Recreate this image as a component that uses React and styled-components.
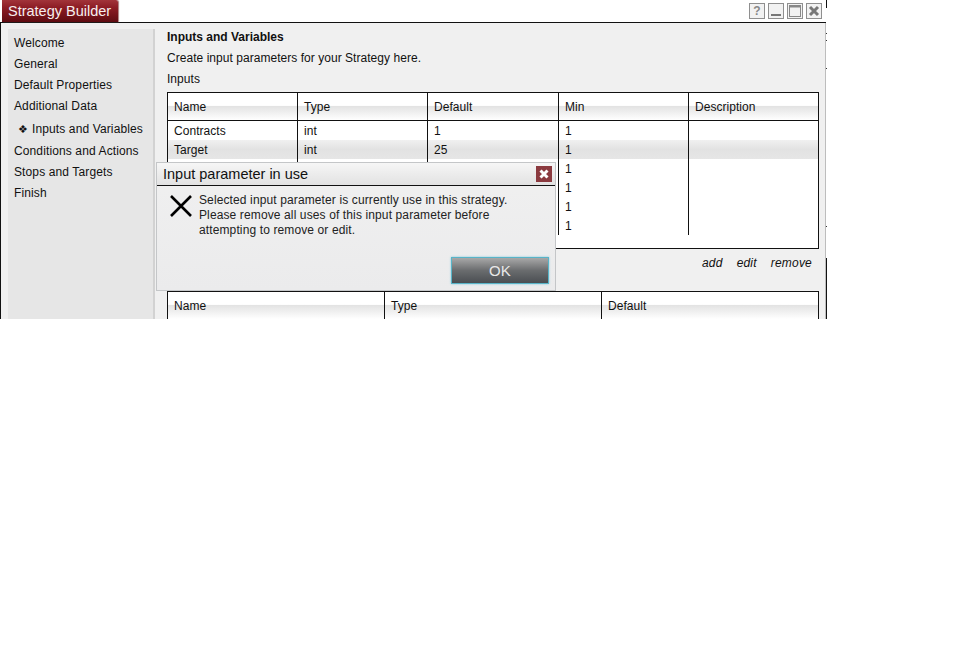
import React from 'react';
import styled, { createGlobalStyle } from 'styled-components';

const Global = createGlobalStyle`
  html, body { margin: 0; padding: 0; background: #fff; }
  body { font-family: "Liberation Sans", Arial, sans-serif; font-size: 12px; letter-spacing: 0.04px; color: #111; }
`;

const Window = styled.div`
  position: relative;
  width: 827px;
  height: 319px;
  padding-right: 1px;
  overflow: hidden;
  background: #fff;
  display: flex;
  flex-direction: column;
  box-sizing: border-box;
`;
const EdgeStrip = styled.div`
  position: absolute;
  top: 0;
  right: 0;
  bottom: 0;
  width: 1px;
  background: linear-gradient(
    #111 0 8px, #fff 8px 33px, #333 33px 34px, #fff 34px 40px, #333 40px 41px,
    #fff 41px 68px, #333 68px 69px, #fff 69px 226px, #333 226px 227px,
    #fff 227px 258px, #111 258px 100%
  );
`;
const TitleBar = styled.header`
  height: 23px;
  flex: none;
  box-sizing: border-box;
  border-bottom: 1px solid #111;
  display: flex;
  justify-content: space-between;
  align-items: flex-start;
  padding: 0 4px 0 2px;
`;
const TitleTab = styled.div`
  width: 116px;
  height: 22px;
  box-sizing: border-box;
  padding: 3px 0 0 6px;
  color: #f6eeee;
  font-size: 14.5px;
  line-height: 16px;
  letter-spacing: 0;
  white-space: nowrap;
  background: linear-gradient(#a2343a 0%, #8c1c24 35%, #741219 70%, #5f0c12 100%);
  border-top-right-radius: 2px;
  box-shadow: 1px 0 1px #a87a7a;
`;
const WinButtons = styled.div`
  display: flex;
  gap: 3px;
  padding: 3px 0 0;
`;
const WinButton = styled.div`
  width: 16px;
  height: 16px;
  box-sizing: border-box;
  border: 1px solid #8f8f8f;
  background: #f2f2f2;
  display: flex;
  align-items: center;
  justify-content: center;
  color: #888;
  font-size: 12px;
  font-weight: 700;
`;
const Main = styled.div`
  flex: 1;
  min-height: 0;
  display: flex;
  background: #f0f0f0;
  border-left: 1px solid #111;
  border-right: 1px solid #bdbdbd;
  padding: 6px 0 0 7px;
`;
const Sidebar = styled.nav`
  flex: none;
  width: 139px;
  background: #e6e6e6;
  border-right: 2px solid #d2d2d2;
  padding: 4px 0 0 6px;
`;
const NavItem = styled.div`
  height: ${p => (p.$active ? '23px' : '21px')};
  line-height: ${p => (p.$active ? '22px' : '20px')};
  padding-left: ${p => (p.$active ? '4px' : '0')};
  white-space: nowrap;
  letter-spacing: ${p => (p.$active ? '0.12px' : '0.12px')};
  margin-top: ${p => (p.$active ? '1px' : '0')};
`;
const Bullet = styled.span`
  display: inline-block;
  width: 14px;
  font-size: 11px;
`;
const Content = styled.section`
  flex: 1;
  min-width: 0;
  padding: 0 6px 0 12px;
`;
const Heading = styled.div`
  font-weight: 700;
  height: 21px;
  line-height: 16px;
  letter-spacing: 0;
`;
const Line = styled.div`
  height: 21px;
  line-height: 16px;
`;
const Table = styled.div`
  box-sizing: border-box;
  border: 1px solid #111;
  background: #fff;
  height: ${p => p.$height}px;
`;
const HeaderRow = styled.div`
  display: grid;
  grid-template-columns: ${p => p.$cols};
  height: 28px;
  box-sizing: border-box;
  border-bottom: 1px solid #111;
  background: linear-gradient(#fff 0 46%, #e3e3e3 50%, #fff 100%);
`;
const HeaderCell = styled.div`
  padding: 7px 0 0 6px;
  line-height: 14px;
  border-right: ${p => (p.$last ? '0' : '1px solid #111')};
`;
const Row = styled.div`
  display: grid;
  grid-template-columns: ${p => p.$cols};
  height: 19px;
  background: ${p => (p.$alt ? 'linear-gradient(#f0f0f0, #e2e2e2 50%, #e6e6e6)' : '#fff')};
`;
const Cell = styled.div`
  padding: 3px 0 0 6px;
  line-height: 15px;
  border-right: ${p => (p.$last ? '0' : '1px solid #111')};
`;
const Actions = styled.div`
  display: flex;
  justify-content: flex-end;
  gap: 14px;
  height: 42px;
  box-sizing: border-box;
  padding: 7px 7px 0 0;
  font-style: italic;
  line-height: 15px;
  letter-spacing: 0.2px;
`;
const Dialog = styled.div`
  position: absolute;
  left: 156px;
  top: 162px;
  width: 400px;
  height: 129px;
  box-sizing: border-box;
  border: 1px solid #c4c6c8;
  background: linear-gradient(#f0f0f0, #ebebec);
  display: flex;
  flex-direction: column;
`;
const DialogHead = styled.div`
  height: 23px;
  flex: none;
  box-sizing: border-box;
  border-bottom: 1px solid #111;
  background: linear-gradient(#f6f6f6, #e2e2e2);
  display: flex;
  align-items: center;
  justify-content: space-between;
  padding: 0 3px 0 6px;
  font-size: 14.5px;
  letter-spacing: 0;
`;
const CloseBox = styled.div`
  width: 16px;
  height: 16px;
  background: #8b3a3f;
  display: flex;
  align-items: center;
  justify-content: center;
`;
const DialogBody = styled.div`
  flex: 1;
  display: flex;
  gap: 7px;
  padding: 7px 0 0 13px;
  line-height: 15px;
  letter-spacing: 0.12px;
  color: #222;
`;
const ErrorIcon = styled.svg`
  flex: none;
  margin-top: 2px;
`;
const DialogFoot = styled.div`
  display: flex;
  justify-content: flex-end;
  padding: 0 6px 6px 0;
`;
const OkButton = styled.div`
  width: 96px;
  height: 25px;
  border: 1px solid #58b4c8;
  box-shadow: 0 0 2px #7fc8d8;
  background: linear-gradient(#a8a8a8, #6a6c6e 50%, #4a4e52);
  color: #e8e8e8;
  font-size: 15px;
  display: flex;
  align-items: center;
  justify-content: center;
`;

const cols1 = '130px 130px 131px 130px 1fr';
const cols2 = '217px 217px 1fr';
const nav = ['Welcome', 'General', 'Default Properties', 'Additional Data'];
const nav2 = ['Conditions and Actions', 'Stops and Targets', 'Finish'];
const rows = [
  ['Contracts', 'int', '1', '1'],
  ['Target', 'int', '25', '1'],
  ['', '', '', '1'],
  ['', '', '', '1'],
  ['', '', '', '1'],
  ['', '', '', '1'],
];

export default function App() {
  return (
    <Window>
      <Global />
      <EdgeStrip />
      <TitleBar>
        <TitleTab>Strategy Builder</TitleTab>
        <WinButtons>
          <WinButton>?</WinButton>
          <WinButton>
            <svg width="12" height="12" viewBox="0 0 12 12"><rect x="1" y="9" width="10" height="2" fill="#777" /></svg>
          </WinButton>
          <WinButton>
            <svg width="12" height="12" viewBox="0 0 12 12"><rect x="0.5" y="0.5" width="11" height="11" fill="none" stroke="#888" /><rect x="0" y="0" width="12" height="2.5" fill="#888" /></svg>
          </WinButton>
          <WinButton>
            <svg width="12" height="12" viewBox="0 0 12 12"><path d="M2 2L10 10M10 2L2 10" stroke="#777" strokeWidth="3" /></svg>
          </WinButton>
        </WinButtons>
      </TitleBar>
      <Main>
        <Sidebar>
          {nav.map(n => <NavItem key={n}>{n}</NavItem>)}
          <NavItem $active><Bullet>❖</Bullet>Inputs and Variables</NavItem>
          {nav2.map(n => <NavItem key={n}>{n}</NavItem>)}
        </Sidebar>
        <Content>
          <Heading>Inputs and Variables</Heading>
          <Line>Create input parameters for your Strategy here.</Line>
          <Line>Inputs</Line>
          <Table $height={157}>
            <HeaderRow $cols={cols1}>
              {['Name', 'Type', 'Default', 'Min'].map(h => <HeaderCell key={h}>{h}</HeaderCell>)}
              <HeaderCell $last>Description</HeaderCell>
            </HeaderRow>
            {rows.map((r, i) => (
              <Row key={i} $cols={cols1} $alt={i === 1}>
                {r.map((c, j) => <Cell key={j}>{c}</Cell>)}
                <Cell $last />
              </Row>
            ))}
          </Table>
          <Actions>
            <span>add</span><span>edit</span><span>remove</span>
          </Actions>
          <Table $height={60}>
            <HeaderRow $cols={cols2}>
              <HeaderCell>Name</HeaderCell>
              <HeaderCell>Type</HeaderCell>
              <HeaderCell $last>Default</HeaderCell>
            </HeaderRow>
          </Table>
        </Content>
      </Main>
      <Dialog>
        <DialogHead>
          <span>Input parameter in use</span>
          <CloseBox>
            <svg width="12" height="12" viewBox="0 0 12 12"><path d="M2.5 2.5L9.5 9.5M9.5 2.5L2.5 9.5" stroke="#fff" strokeWidth="3" /></svg>
          </CloseBox>
        </DialogHead>
        <DialogBody>
          <ErrorIcon width="22" height="22" viewBox="0 0 22 22"><path d="M1 1L21 21M21 1L1 21" stroke="#000" strokeWidth="2.6" /></ErrorIcon>
          <div>Selected input parameter is currently use in this strategy.<br />Please remove all uses of this input parameter before<br />attempting to remove or edit.</div>
        </DialogBody>
        <DialogFoot><OkButton>OK</OkButton></DialogFoot>
      </Dialog>
    </Window>
  );
}
